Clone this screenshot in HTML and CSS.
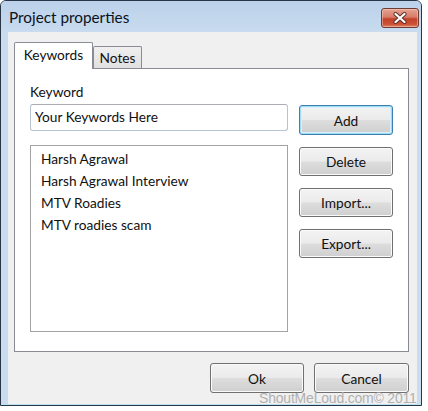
FILE: index.html
```html
<!DOCTYPE html>
<html lang="en">
<head>
  <meta charset="UTF-8">
  <title>Project properties</title>
  <link rel="stylesheet" href="styles.css">
</head>
<body>

<div class="window">
  <div class="titlebar">
    <span class="title">Project properties</span>
    <button class="close-button" title="Close">
      <svg width="16" height="12" viewBox="0 0 16 12">
        <path d="M3.5 2 L12.5 10 M12.5 2 L3.5 10" stroke="#5a2a22" stroke-width="4" stroke-linecap="round"/>
        <path d="M3.5 2 L12.5 10 M12.5 2 L3.5 10" stroke="#ffffff" stroke-width="2.3" stroke-linecap="round"/>
      </svg>
    </button>
  </div>

  <div class="frame">
    <div class="client">
      <div class="tabs">
        <div class="tab active">Keywords</div>
        <div class="tab">Notes</div>
      </div>

      <div class="panel">
        <label class="field-label" for="keyword">Keyword</label>
        <div class="row">
          <input id="keyword" class="keyword-input" type="text" value="Your Keywords Here">
          <button class="btn default-btn">Add</button>
        </div>
        <div class="row list-row">
          <ul class="keyword-list">
            <li>Harsh Agrawal</li>
            <li>Harsh Agrawal Interview</li>
            <li>MTV Roadies</li>
            <li>MTV roadies scam</li>
          </ul>
          <div class="side-buttons">
            <button class="btn">Delete</button>
            <button class="btn">Import...</button>
            <button class="btn">Export...</button>
          </div>
        </div>
      </div>

      <div class="dialog-buttons">
        <button class="btn">Ok</button>
        <button class="btn cancel-btn">Cancel</button>
      </div>
    </div>
  </div>
</div>

<div class="watermark">ShoutMeLoud.com© 2011</div>

</body>
</html>
```

FILE: styles.css
```css
body {
  margin: 0;
  background: #ffffff;
  font-family: Lato, "Liberation Sans", sans-serif;
  font-size: 13.7px;
  color: #111;
  position: relative;
  width: 428px;
  height: 411px;
  overflow: hidden;
}

/* window chrome */
.window {
  width: 422px;
  height: 406px;
  box-sizing: border-box;
  border: 1px solid #2a3646;
  border-radius: 6px 6px 0 0;
  background: #c9dbef;
  display: flex;
  flex-direction: column;
}

.titlebar {
  height: 31px;
  flex-shrink: 0;
  display: flex;
  justify-content: space-between;
  align-items: flex-start;
  padding: 6px 2px 0 8px;
  box-sizing: border-box;
  background: linear-gradient(#bcd2ea, #c8dbef);
  border-radius: 5px 5px 0 0;
}

.title {
  font-size: 15.3px;
  line-height: 20px;
  color: #0b1320;
}

.close-button {
  width: 38px;
  height: 20px;
  margin-top: 1px;
  padding: 0;
  border: 1px solid #6b3b34;
  border-radius: 3px;
  background: linear-gradient(#e6a394 0%, #d77b67 45%, #c2402a 55%, #cc5233 85%, #de8468 100%);
  box-shadow: inset 0 0 0 1px rgba(255, 215, 205, 0.45);
  display: flex;
  align-items: center;
  justify-content: center;
}

.frame {
  flex: 1;
  display: flex;
  padding: 0 5px 1px 7px;
  background: #cadcf0;
  box-shadow: inset 0 -1px 0 #b9e2f2;
}

.client {
  flex: 1;
  background: #f0f0f0;
  padding: 10px 8px 11px 6px;
  display: flex;
  flex-direction: column;
}

/* tabs */
.tabs {
  height: 26px;
  display: flex;
  align-items: flex-end;
}

.tab {
  box-sizing: border-box;
  border: 1px solid #898c95;
  border-bottom: none;
  text-align: center;
  line-height: 18px;
  height: 22px;
  width: 49px;
  padding-top: 2px;
  background: linear-gradient(#f0f0f0, #e0e0e0);
  border-radius: 2px 2px 0 0;
}

.tab.active {
  width: 79px;
  height: 27px;
  padding-top: 3px;
  margin-bottom: -1px;
  background: #ffffff;
  position: relative;
  z-index: 1;
}

.panel {
  border: 1px solid #898c95;
  background: #ffffff;
  padding: 14px 15px 19px 15px;
  display: flex;
  flex-direction: column;
}

.field-label {
  line-height: 18px;
  margin-bottom: 3px;
}

.row {
  display: flex;
  gap: 11px;
  align-items: flex-start;
}

.keyword-input {
  width: 258px;
  height: 27px;
  box-sizing: border-box;
  margin: 0;
  padding: 0 4px 2px 4px;
  font: inherit;
  color: #111;
  border: 1px solid #b6c3d0;
  border-top-color: #abadb3;
  border-radius: 3px;
  outline: none;
}

.list-row {
  margin-top: 10px;
}

.keyword-list {
  width: 258px;
  height: 187px;
  box-sizing: border-box;
  margin: 0;
  padding: 2px 8px 0 10px;
  list-style: none;
  border: 1px solid #a3a3a3;
  line-height: 22px;
}

.side-buttons {
  display: flex;
  flex-direction: column;
  gap: 12px;
  padding-top: 2px;
}

/* push buttons */
.btn {
  width: 94px;
  height: 29px;
  margin: 0;
  padding: 0;
  font: inherit;
  color: #111;
  border: 1px solid #707070;
  border-radius: 3px;
  background: linear-gradient(#f3f3f3 0%, #ebebeb 48%, #dddddd 52%, #cfcfcf 100%);
  box-shadow: inset 0 0 0 1px #fbfbfb;
}

.default-btn {
  height: 30px;
  margin-top: 1px;
  border-color: #3c7fb1;
  box-shadow: inset 0 0 0 1px #9fdcf4, inset 0 0 0 2px #d8f0fb;
}

.dialog-buttons {
  margin-top: 11px;
  display: flex;
  justify-content: flex-end;
  gap: 10px;
}

.dialog-buttons .btn {
  height: 30px;
}

.cancel-btn {
  width: 95px;
}

.watermark {
  position: absolute;
  left: 259px;
  top: 390px;
  font-family: "Liberation Sans", sans-serif;
  font-size: 14px;
  line-height: 16px;
  color: #b0b0b0;
  letter-spacing: -0.2px;
  white-space: nowrap;
}
```
